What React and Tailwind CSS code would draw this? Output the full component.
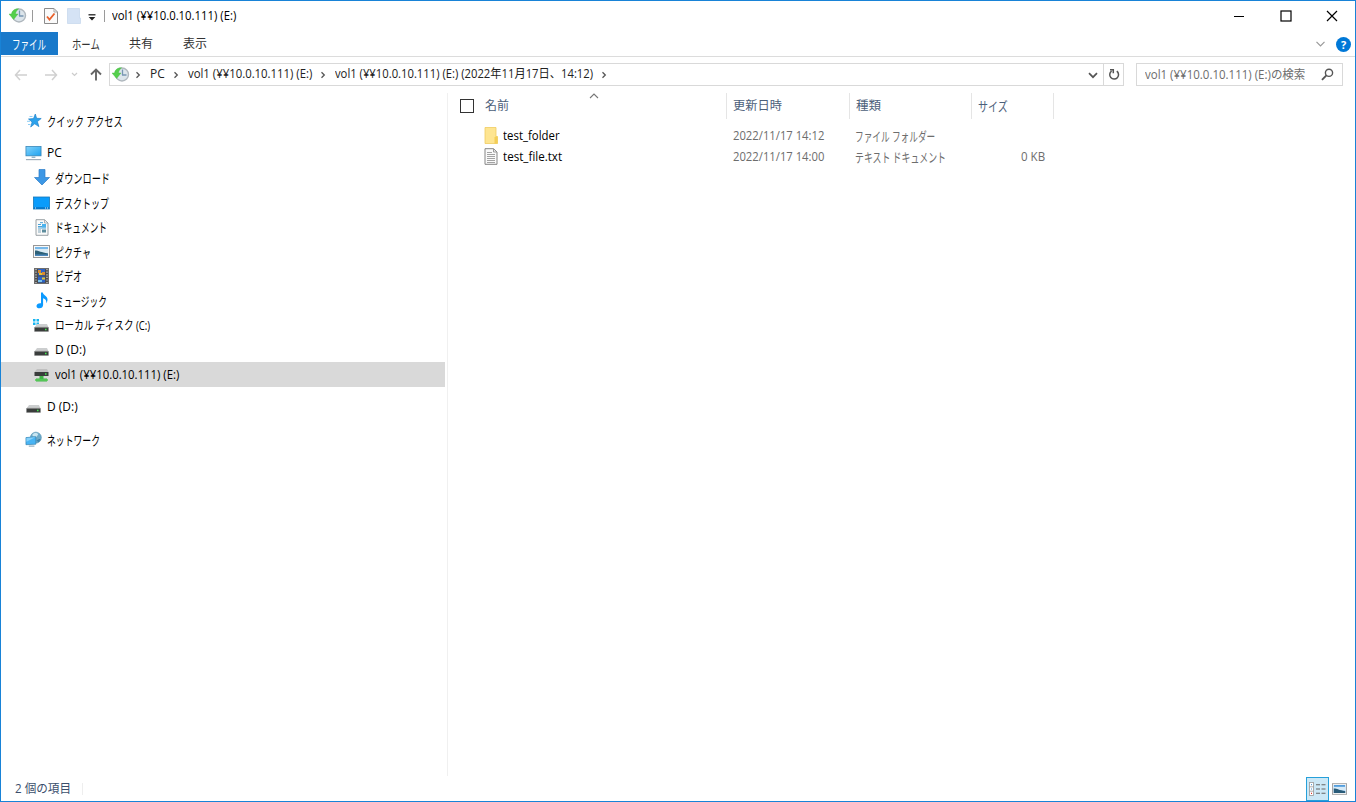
import { useLayoutEffect, useRef, useState } from 'react';

// Text squeezed to the width that the narrow UI font would give it
function Label({ w, children, className = '' }) {
  const ref = useRef(null);
  const [scale, setScale] = useState(1);

  useLayoutEffect(() => {
    setScale(w / ref.current.offsetWidth);
  }, [w, children]);

  return (
    <span className={`block shrink-0 whitespace-nowrap ${className}`} style={{ width: w }}>
      <span ref={ref} className="inline-block origin-left" style={{ transform: `scaleX(${scale})` }}>
        {children}
      </span>
    </span>
  );
}

function HistoryIcon() {
  return (
    <svg width="18" height="16" viewBox="0 0 18 16" className="shrink-0">
      <circle cx="10" cy="7.5" r="6.5" fill="#dce5eb" stroke="#b0b8be" strokeWidth="1.4" />
      <path d="M10.500 8V2.500M10 8h4.500" stroke="#7795b3" strokeWidth="1.300" fill="none" />
      <path d="M9.500.8C5.500.6 3 2.800 2.500 6H0l4.600 5.500L9 6H6.500C6.800 4 7.700 2.300 9.500.8Z" fill="#55cf4c" stroke="#45b944" strokeWidth=".4" />
    </svg>
  );
}

function Chevron({ className = '' }) {
  return (
    <svg width="6" height="8" viewBox="0 0 6 8" className={`shrink-0 ${className}`}>
      <path d="M1.500 1.200 4.300 4 1.500 6.800" fill="none" stroke="#555" strokeWidth="1.300" />
    </svg>
  );
}

function StarIcon() {
  return (
    <svg width="16" height="16" viewBox="0 0 16 16">
      <path d="m9.300 1 1.300 4.300 4.600.2-3.800 3.100 1.500 5-4.200-2.800-4 3.200 1.400-5L2.500 6l5-.4Z" fill="#2ca2ec" stroke="#1f83cc" strokeWidth=".7" />
      <path d="M3.500 3.500h3M1 8.300h3M2 11.500h2.500" stroke="#8dcdf4" strokeWidth="1" />
    </svg>
  );
}

function PcIcon() {
  return (
    <svg width="18" height="16" viewBox="0 0 18 16">
      <defs>
        <linearGradient id="screen" x1="0" y1="0" x2="1" y2="1">
          <stop offset="0" stopColor="#83d3fb" />
          <stop offset="1" stopColor="#1ca2f0" />
        </linearGradient>
      </defs>
      <rect x="1" y="1" width="16" height="10" fill="url(#screen)" stroke="#3583b5" strokeWidth=".8" />
      <path d="M7 12.500h4" stroke="#8eb2c8" strokeWidth="1.500" />
      <path d="M1 15h16" stroke="#9aa9b6" strokeWidth="1.200" />
    </svg>
  );
}

function DownloadIcon() {
  return (
    <svg width="16" height="17" viewBox="0 0 16 17">
      <path d="M5 .5h6v8h4.500L8 16 .5 8.500H5Z" fill="#3c97e5" stroke="#2c7cc7" strokeWidth=".7" />
    </svg>
  );
}

function DesktopIcon() {
  return (
    <svg width="17" height="14" viewBox="0 0 17 14">
      <rect x=".5" y="1" width="16" height="12" fill="#0a9cfb" stroke="#1577b9" strokeWidth=".8" />
      <path d="M1 12h15" stroke="#0569b6" strokeWidth="1.200" />
      <path d="M2 12h1M12 12h1M14 12h1" stroke="#d3ecff" strokeWidth="1" />
    </svg>
  );
}

function DocumentIcon() {
  return (
    <svg width="14" height="17" viewBox="0 0 14 17">
      <path d="M1 .7h8.500L13 4v12.300H1Z" fill="#fafafa" stroke="#8f979c" strokeWidth=".9" />
      <path d="M9.500.7V4H13" fill="none" stroke="#9aa2a7" strokeWidth=".8" />
      <path d="M5 3.700h3M3 5.500h3M3 7.500h8M3 9h8" stroke="#4aa3d8" strokeWidth="1" />
      <path d="M7 5h4v3.500H7z" fill="#4ab2ed" />
      <path d="M3 11h3M3 13h3" stroke="#83a5b7" strokeWidth="1" />
      <path d="M7 10.500h4v3H7z" fill="#5c8c9d" />
    </svg>
  );
}

function PictureIcon() {
  return (
    <svg width="17" height="13" viewBox="0 0 17 13">
      <rect x=".5" y=".5" width="16" height="12" fill="#f8f8f8" stroke="#979797" />
      <rect x="2" y="2" width="13" height="9" fill="#78b9ea" />
      <path d="M2 4h13v4.500H2z" fill="#d9eaf4" />
      <path d="M2 5.500c4 0 6 2 13 3V11H2Z" fill="#2d6077" />
      <path d="M2 9.500h13V11H2z" fill="#4a87bd" />
    </svg>
  );
}

function VideoIcon() {
  return (
    <svg width="15" height="16" viewBox="0 0 15 16">
      <rect x=".5" y=".5" width="14" height="15" fill="#4c4c4c" stroke="#6d6d6d" />
      <path d="M2 1v14M13 1v14" stroke="#d8d8d8" strokeWidth="1.200" strokeDasharray="1.200 1.400" />
      <rect x="4" y="1" width="7" height="6.500" fill="#2c62c6" />
      <rect x="4" y="8.500" width="7" height="6" fill="#2c62c6" />
      <path d="M4 2h3v3H4zM8 4h3v3H8z" fill="#d98c32" />
      <path d="M5 5h3v2H5zM8 9.500h3v2H8z" fill="#e4c438" />
      <path d="M4 12h4v2H4z" fill="#7cc2e9" />
    </svg>
  );
}

function MusicIcon() {
  return (
    <svg width="12" height="17" viewBox="0 0 12 17">
      <path d="M5 .5h1.800c.4 2.700 4.700 3.500 4.700 7 0 1.600-.5 2.700-1.300 3.800.6-2.700-.6-4.200-3.100-5V13c0 2-1.500 3.300-3.600 3.300C1.600 16.300.5 15.400.5 14c0-1.800 2.100-3.100 4.500-2.700Z" fill="#0c9aff" />
    </svg>
  );
}

function DriveIcon({ windows, network }) {
  return (
    <svg width="17" height="16" viewBox="0 0 17 16">
      {windows && <path d="M0 1h2.500v2.500H0zM3.500 1H6v2.500H3.500zM0 4.500h2.500V7H0zM3.500 4.500H6V7H3.500z" fill="#18b5f0" />}
      {network ? (
        <g>
          <path d="M4 2h10l1.500 3h-14Z" fill="#c0c0c0" />
          <rect x="1.500" y="5" width="14" height="4" fill="#3a3d3c" />
          <path d="M12 7h1.500" stroke="#42ef4e" strokeWidth="1.300" />
          <path d="M6.500 9h4v2.500H14V14.500H3V11.500h3.500Z" fill="#42b649" />
          <path d="M2 13h13" stroke="#59cb5a" strokeWidth="1.600" />
        </g>
      ) : (
        <g>
          <path d="M4 6h10l1.500 3.500h-14Z" fill="#cccecf" />
          <rect x="1.500" y="9.300" width="14" height="4.200" rx=".5" fill="#3a3d3c" stroke="#8f9191" strokeWidth=".7" />
          <path d="M12 11.500h1.500" stroke="#42ef4e" strokeWidth="1.300" />
        </g>
      )}
    </svg>
  );
}

function NetworkIcon() {
  return (
    <svg width="18" height="17" viewBox="0 0 18 17">
      <circle cx="11.500" cy="6.500" r="5.800" fill="#6daac9" stroke="#4a8cad" strokeWidth=".6" />
      <path d="M8 3c2-2 5-1.500 6 0l-2 3-4-1Z" fill="#c9e5f0" />
      <path d="M12 9.500 15 8l1.500 0-2 3.500Z" fill="#3c82a9" />
      <path d="m1 6.500 10.500-1v8L1 14Z" fill="#48b4f4" stroke="#337fab" strokeWidth=".7" />
      <path d="m1.500 7 9.500-1-9.500 5Z" fill="#86d1fa" />
      <path d="M4 15.500h6" stroke="#8eabbc" strokeWidth="1.200" />
    </svg>
  );
}

const pcItems = [
  { name: 'ダウンロード', w: 55, icon: <DownloadIcon />, kana: true },
  { name: 'デスクトップ', w: 54, icon: <DesktopIcon />, kana: true },
  { name: 'ドキュメント', w: 52, icon: <DocumentIcon />, kana: true },
  { name: 'ピクチャ', w: 36, icon: <PictureIcon />, kana: true },
  { name: 'ビデオ', w: 27, icon: <VideoIcon />, kana: true },
  { name: 'ミュージック', w: 52, icon: <MusicIcon />, kana: true },
  { name: 'ローカル ディスク (C:)', w: 95, icon: <DriveIcon windows /> },
  { name: 'D (D:)', w: 31, icon: <DriveIcon /> },
  { name: 'vol1 (¥¥10.0.10.111) (E:)', w: 124, icon: <DriveIcon network />, selected: true },
];

function TreeItem({ name, w, icon, selected, nested, kana }) {
  return (
    <div className={`flex h-[24.6px] items-center text-black ${nested ? 'pl-8' : 'pl-6'} ${selected ? 'bg-[#d9d9d9]' : ''}`}>
      <span className="mr-[5px] flex w-[17px] justify-center">{icon}</span>
      <Label w={w} className={kana ? 'text-[13px]' : ''}>{name}</Label>
    </div>
  );
}

function TitleBar() {
  return (
    <div className="flex h-[31px] shrink-0 items-center pb-px pl-2">
      <HistoryIcon />
      <span className="ml-[5px] h-3 w-px bg-[#9a9a9a]" />
      <svg width="14" height="16" viewBox="0 0 14 16" className="ml-[11px]">
        <path d="M.5.5H10L13.500 4v11.500H.5Z" fill="#fafafa" stroke="#8b8b8b" />
        <path d="M10 .5V4h3.500" fill="none" stroke="#aaa" />
        <path d="m3 8.500 2.500 3 5-6" fill="none" stroke="#e8612c" strokeWidth="1.800" />
      </svg>
      <svg width="14" height="16" viewBox="0 0 14 16" className="ml-[9px]">
        <path d="M.5.500h12V10h1v5.500H.5Z" fill="#d5e3f5" stroke="#c8d9ee" strokeWidth=".8" />
      </svg>
      <svg width="8" height="7" viewBox="0 0 8 7" className="ml-[7px] mt-0.5">
        <path d="M.5.800h7" stroke="#222" strokeWidth="1.300" />
        <path d="M.7 3h6.600L4 6.500Z" fill="#222" />
      </svg>
      <span className="ml-2 mr-[7px] h-3 w-px bg-[#9a9a9a]" />
      <Label w={124} className="text-black">vol1 (¥¥10.0.10.111) (E:)</Label>
      <div className="ml-auto mr-[17px] flex items-center gap-[34.500px] text-black">
        <svg width="12" height="12" viewBox="0 0 12 12"><path d="M1 6.500h10" stroke="currentColor" /></svg>
        <svg width="12" height="12" viewBox="0 0 12 12"><rect x="1" y="1" width="10" height="10" fill="none" stroke="currentColor" strokeWidth="1.200" /></svg>
        <svg width="12" height="12" viewBox="0 0 12 12"><path d="m1 1 10 10M11 1 1 11" stroke="currentColor" strokeWidth="1.200" /></svg>
      </div>
    </div>
  );
}

function RibbonTabs() {
  return (
    <div className="flex h-[25px] shrink-0 items-start border-b border-[#dcdcdc] text-[#333]">
      <div className="flex h-[23px] w-[57px] items-center bg-[#1979ca] pl-[11px] text-[13px] text-white">
        <Label w={34}>ファイル</Label>
      </div>
      <div className="flex h-6 items-center pl-[14px]">
        <Label w={28} className="text-[13px]">ホーム</Label>
        <Label w={24} className="ml-[29px]">共有</Label>
        <Label w={24} className="ml-[30px]">表示</Label>
      </div>
      <div className="ml-auto mr-1 flex h-6 items-center gap-[11px]">
        <svg width="9" height="6" viewBox="0 0 9 6"><path d="m.5.800 4 4 4-4" fill="none" stroke="#999" strokeWidth="1.200" /></svg>
        <span className="flex size-[15px] items-center justify-center rounded-full bg-[#0078d7] text-[11px] font-bold leading-none text-white">?</span>
      </div>
    </div>
  );
}

function AddressBar() {
  return (
    <div className="flex h-[36px] shrink-0 items-start pt-1.5 text-[#222]">
      <div className="flex h-[23px] w-[108px] items-center pl-[13px]">
        <svg width="14" height="12" viewBox="0 0 14 12"><path d="M13 6H1.500M6 1 1.500 6 6 11" fill="none" stroke="#d0d0d0" strokeWidth="1.500" /></svg>
        <svg width="14" height="12" viewBox="0 0 14 12" className="ml-4"><path d="M1 6h11.500M8 1l4.500 5L8 11" fill="none" stroke="#d0d0d0" strokeWidth="1.500" /></svg>
        <svg width="7" height="5" viewBox="0 0 7 5" className="ml-[13px]"><path d="m1 1 2.500 2.500L6 1" fill="none" stroke="#ccc" strokeWidth="1.200" /></svg>
        <svg width="12" height="13" viewBox="0 0 12 13" className="ml-3"><path d="M6 12.500V1.500M1 6.500l5-5 5 5" fill="none" stroke="#666" strokeWidth="1.900" /></svg>
      </div>
      <div className="flex h-[23px] w-[1015px] items-center border border-[#d9d9d9] pl-0.5">
        <HistoryIcon />
        <Chevron className="ml-[5px]" />
        <Label w={15} className="ml-[9px] pb-px">PC</Label>
        <Chevron className="ml-2" />
        <Label w={124} className="ml-[9px] pb-px">vol1 (¥¥10.0.10.111) (E:)</Label>
        <Chevron className="ml-2" />
        <Label w={258} className="ml-[9px] pb-px">vol1 (¥¥10.0.10.111) (E:) (2022年11月17日、14:12)</Label>
        <Chevron className="ml-2" />
        <svg width="10" height="7" viewBox="0 0 10 7" className="ml-auto mr-[5px] mt-0.5"><path d="m1 1.200 4 4 4-4" fill="none" stroke="#555" strokeWidth="1.700" /></svg>
        <div className="flex h-full w-5 items-center justify-center border-l border-[#d9d9d9]">
          <svg width="12" height="13" viewBox="0 0 12 13">
            <path d="M8.800 3.200a4.400 4.400 0 1 1-5.200-.1M2 1.800h3.300v3.500" fill="none" stroke="#555" strokeWidth="1.500" />
          </svg>
        </div>
      </div>
      <div className="ml-3 flex h-[23px] w-[207px] items-center border border-[#d9d9d9] pl-2 text-[#6d6d6d]">
        <Label w={160}>vol1 (¥¥10.0.10.111) (E:)の検索</Label>
        <svg width="13" height="13" viewBox="0 0 13 13" className="ml-auto mr-2">
          <circle cx="8" cy="4.800" r="3.600" fill="none" stroke="#555" strokeWidth="1.400" />
          <path d="M5.400 7.400 1 11.800" stroke="#555" strokeWidth="1.900" />
        </svg>
      </div>
    </div>
  );
}

function FileList() {
  return (
    <div className="flex-1">
      <div className="relative flex h-[26px] items-center text-[#4c607a]">
        <div className="flex h-full w-[279px] items-center border-r border-[#e5e5e5] pl-3">
          <span className="size-[14px] border border-[#333]" />
          <Label w={24} className="ml-[11px]">名前</Label>
        </div>
        <svg width="10" height="6" viewBox="0 0 10 6" className="absolute left-[141px] top-0"><path d="m1 5 4-4 4 4" fill="none" stroke="#777" strokeWidth="1.100" /></svg>
        <div className="flex h-full w-[122.500px] items-center border-r border-[#e5e5e5] pl-1.5"><Label w={49}>更新日時</Label></div>
        <div className="flex h-full w-[122.500px] items-center border-r border-[#e5e5e5] pl-1.5"><Label w={25}>種類</Label></div>
        <div className="flex h-full w-[82px] items-center border-r border-[#e5e5e5] pl-1.5 text-[13px]"><Label w={30}>サイズ</Label></div>
      </div>
      <div className="pt-[6px] text-[#6d6d6d]">
        <div className="flex h-[21.500px] items-center pl-9">
          <svg width="15" height="17" viewBox="0 0 15 17" className="mb-px mr-1 shrink-0">
            <path d="M1 .5h11v9h1.500v7H1Z" fill="#fee591" stroke="#f0cc61" strokeWidth=".8" />
            <path d="M11.500 9.500h2v7h-3v-6Z" fill="#f3ce57" />
          </svg>
          <div className="w-[230px] text-black"><Label w={57}>test_folder</Label></div>
          <div className="w-[122px]"><Label w={91}>2022/11/17 14:12</Label></div>
          <Label w={80} className="text-[13px]">ファイル フォルダー</Label>
        </div>
        <div className="flex h-[21.500px] items-center pl-9">
          <svg width="15" height="17" viewBox="0 0 15 17" className="mb-px mr-1 shrink-0">
            <path d="M1 .700h8.500L13 4v12.300H1Z" fill="#fafafa" stroke="#858585" />
            <path d="M9.500.700V4H13" fill="none" stroke="#999" />
            <path d="M3 4.500h5M3 6.500h8M3 8.500h8M3 10.500h8M3 12.500h8M3 14.500h8" stroke="#999" strokeWidth=".9" />
          </svg>
          <div className="w-[230px] text-black"><Label w={59}>test_file.txt</Label></div>
          <div className="w-[122px]"><Label w={91}>2022/11/17 14:00</Label></div>
          <Label w={91} className="text-[13px]">テキスト ドキュメント</Label>
          <Label w={24} className="ml-[75px]">0 KB</Label>
        </div>
      </div>
    </div>
  );
}

function StatusBar() {
  return (
    <div className="flex h-[25px] shrink-0 items-center pl-[14px] text-[#3b4f6c]">
      <Label w={56} className="pt-px">2 個の項目</Label>
      <span className="ml-[11px] h-3 w-px bg-[#eee]" />
      <div className="ml-auto mr-2 flex items-center">
        <div className="flex h-6 w-[23px] items-center justify-center border border-[#26a0da] bg-[#cce8f6]">
          <svg width="17" height="14" viewBox="0 0 17 14">
            <rect x=".5" y=".5" width="4" height="13" fill="#fff" stroke="#999" strokeWidth=".8" />
            <path d="M.5 4.800h4M.5 9.200h4" stroke="#999" strokeWidth=".8" />
            <path d="M2 2.700h1M2 7h1" stroke="#3b8cd0" />
            <path d="M2 11.300h1" stroke="#e03a2c" strokeWidth="1.300" />
            <path d="M7 2.700h4M12.500 2.700h4M7 7h4M12.500 7h4M7 11.300h4M12.500 11.300h4" stroke="#666" strokeWidth="1.100" />
          </svg>
        </div>
        <svg width="15" height="12" viewBox="0 0 17 13" className="ml-[3px]">
          <rect x=".5" y=".5" width="16" height="12" fill="#fff" stroke="#999" />
          <rect x="2" y="2" width="13" height="9" fill="#4f9bdc" />
          <path d="M2 4h13v4.500H2z" fill="#d6eaf7" />
          <path d="M2 6c4 0 6 2 13 3v2H2Z" fill="#295b78" />
        </svg>
      </div>
    </div>
  );
}

export default function App() {
  return (
    <div className="flex h-[802px] w-[1356px] flex-col overflow-hidden border border-[#1883d7] bg-white font-['Open_Sans','Noto_Sans_CJK_JP',sans-serif] text-[12px] leading-[18px]">
      <TitleBar />
      <RibbonTabs />
      <AddressBar />
      <div className="flex min-h-0 flex-1">
        <div className="w-[447px] shrink-0 border-r border-[#f0f0f0] pt-[15.500px]">
          <div className="w-[444px]">
            <TreeItem name="クイック アクセス" w={76} icon={<StarIcon />} kana />
            <div className="h-2" />
            <TreeItem name="PC" w={15} icon={<PcIcon />} />
            {pcItems.map((item) => (
              <TreeItem key={item.name} {...item} nested />
            ))}
            <div className="h-2" />
            <TreeItem name="D (D:)" w={31} icon={<DriveIcon />} />
            <div className="h-2" />
            <TreeItem name="ネットワーク" w={53} icon={<NetworkIcon />} kana />
          </div>
        </div>
        <FileList />
      </div>
      <StatusBar />
    </div>
  );
}
